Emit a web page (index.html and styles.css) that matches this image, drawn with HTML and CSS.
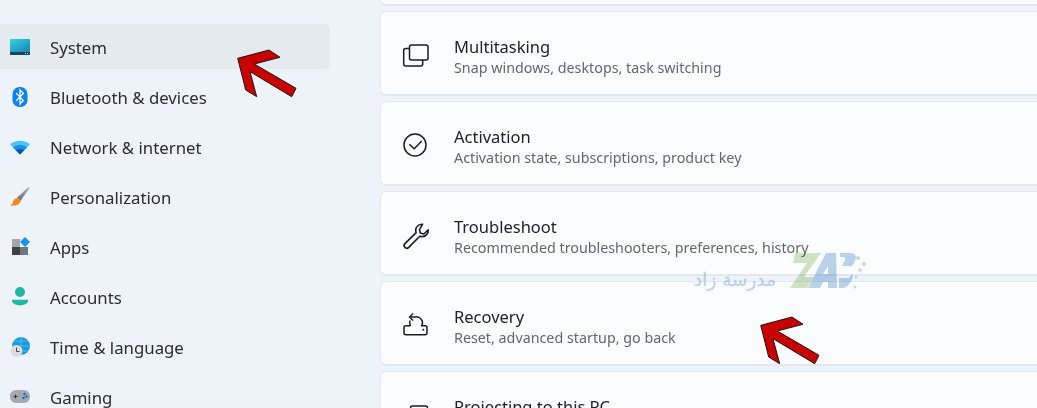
FILE: index.html
```html
<!DOCTYPE html>
<html lang="en">
<head>
<meta charset="utf-8">
<title>Settings</title>
<link rel="stylesheet" href="styles.css">
</head>
<body>
<div class="app">
  <nav class="sidebar">
    <div class="nav-item selected">
      <svg class="nav-icon" viewBox="0 0 20 20"><defs><linearGradient id="sys" x1="0" y1="0" x2="1" y2="1"><stop offset="0" stop-color="#35d3de"/><stop offset="1" stop-color="#1585b8"/></linearGradient></defs><path d="M0 2.800a.8.8 0 0 1 .8-.8h18.400a.8.8 0 0 1 .8.8V14.500H0z" fill="url(#sys)"/><path d="M0 14.500h20v2.700a.8.8 0 0 1-.8.8H.8a.8.8 0 0 1-.8-.8z" fill="#0c4a68"/><rect x="15" y="16" width="1" height="1" fill="#9cc"/><rect x="17" y="16" width="1" height="1" fill="#9cc"/></svg>
      <span>System</span>
    </div>
    <div class="nav-item">
      <svg class="nav-icon" viewBox="0 0 20 20"><rect x="2.500" y="0" width="15" height="20" rx="7" fill="#0a84f0"/><path d="M6.300 6.300l7 7.200-3.300 3.500V3l3.300 3.500-7 7.200" fill="none" stroke="#fff" stroke-width="1.300"/></svg>
      <span>Bluetooth &amp; devices</span>
    </div>
    <div class="nav-item">
      <svg class="nav-icon" viewBox="0 0 20 20"><path d="M0 7.200C5.500 2.500 14.500 2.500 20 7.200L10 17.500z" fill="#47c6f5"/><path d="M3 10.400C7 7.200 13 7.200 17 10.400L10 17.500z" fill="#1a8fe3"/><path d="M6 13.300c2.500-1.700 5.500-1.700 8 0L10 17.500z" fill="#0d56ad"/></svg>
      <span>Network &amp; internet</span>
    </div>
    <div class="nav-item">
      <svg class="nav-icon" viewBox="0 0 20 20"><defs><linearGradient id="brush" x1="0" y1="1" x2="1" y2="0"><stop offset="0" stop-color="#5f6770"/><stop offset="1" stop-color="#b4b8bc"/></linearGradient></defs><path d="M18.200.3c.8-.5 1.600.2 1.200 1L10.500 14 6.800 11z" fill="url(#brush)"/><path d="M6.500 11.300c2-.8 4 .8 3.900 2.900-.1 3-3.700 4.800-10.400 4.400 2-.8 2.700-2 3-3.800.3-1.700 1.500-3 3.500-3.500z" fill="#f78a1d"/></svg>
      <span>Personalization</span>
    </div>
    <div class="nav-item">
      <svg class="nav-icon" viewBox="0 0 20 20"><rect x="2" y="2" width="8" height="8" fill="#a3a7ab"/><rect x="2" y="10" width="8" height="8" fill="#3d4145"/><rect x="10" y="10" width="8" height="8" fill="#70767b"/><path d="M15 0l5 5-5 5-5-5z" fill="#1593ef"/></svg>
      <span>Apps</span>
    </div>
    <div class="nav-item">
      <svg class="nav-icon" viewBox="0 0 20 20"><circle cx="10" cy="5" r="5" fill="#1fb9a1"/><path d="M2 12.800h16c.3 0 .2 2.500-1.500 3.800-1.600 1.200-3.800 1.800-6.500 1.800s-4.900-.6-6.500-1.800C1.800 15.300 1.700 12.800 2 12.800z" fill="#1fb9a1"/></svg>
      <span>Accounts</span>
    </div>
    <div class="nav-item">
      <svg class="nav-icon" viewBox="0 0 20 20"><circle cx="11" cy="9" r="9" fill="#1a9adb"/><path d="M11 0v18M2 9h18M4 4h14M4 14h14" stroke="#5fd0ea" stroke-width=".7" fill="none"/><circle cx="6.500" cy="14" r="6" fill="#dcdcdc"/><path d="M6.500 10.500v4h3" stroke="#444" stroke-width="1" fill="none"/></svg>
      <span>Time &amp; language</span>
    </div>
    <div class="nav-item">
      <svg class="nav-icon" viewBox="0 0 20 20"><rect x="0" y="3" width="20" height="13" rx="6" fill="#a5a8ac"/><path d="M3.500 9.500h4M5.500 7.500v4" stroke="#333" stroke-width="1"/><circle cx="14.500" cy="7" r="1.200" fill="#0c6cc8"/><circle cx="16.500" cy="9.500" r="1.200" fill="#0c6cc8"/><circle cx="13.500" cy="11" r="1.200" fill="#0c6cc8"/></svg>
      <span>Gaming</span>
    </div>
  </nav>
  <main class="list">
    <div class="card"></div>
    <div class="card">
      <svg class="card-icon" viewBox="0 0 26 26"><rect x="6.500" y="1" width="18.500" height="15" rx="2" fill="none" stroke="#1c1c1c" stroke-width="1.500"/><path d="M6.500 4.500H2.700a2 2 0 0 0-2 2v13.500a2 2 0 0 0 2 2h15a2 2 0 0 0 2-2v-4" fill="none" stroke="#1c1c1c" stroke-width="1.500"/></svg>
      <div class="card-text"><div class="card-title">Multitasking</div><div class="card-sub">Snap windows, desktops, task switching</div></div>
    </div>
    <div class="card">
      <svg class="card-icon" viewBox="0 0 26 26"><circle cx="12" cy="11" r="11" fill="none" stroke="#1c1c1c" stroke-width="1.500"/><path d="M6.300 10.300l5 4.400L18.700 7" fill="none" stroke="#1c1c1c" stroke-width="1.500"/></svg>
      <div class="card-text"><div class="card-title">Activation</div><div class="card-sub">Activation state, subscriptions, product key</div></div>
    </div>
    <div class="card">
      <svg class="card-icon" viewBox="0 1 24.500 24.500"><path d="M18.500 1.200c-3.500-.3-6.500 2.300-6.500 5.800 0 .8.100 1.400.4 2.100L1.800 19.500c-1 1.200-1 2.700 0 3.600s2.500 1 3.600-.1L15.800 12.500c.7.300 1.400.4 2.200.4 3.500 0 6-2.900 5.800-6.500l-4.200 4-3.300-.9-.8-3.200z" fill="none" stroke="#1c1c1c" stroke-width="1.500" stroke-linejoin="round"/></svg>
      <div class="card-text"><div class="card-title">Troubleshoot</div><div class="card-sub">Recommended troubleshooters, preferences, history</div></div>
    </div>
    <div class="card">
      <svg class="card-icon" viewBox="0 0 26 26"><path d="M7 11.700H3a2 2 0 0 0-2 2v5a2 2 0 0 0 2 2h19a2 2 0 0 0 2-2v-5a2 2 0 0 0-2-2h-4" fill="none" stroke="#1c1c1c" stroke-width="1.500"/><path d="M7.500 3H12a6 6 0 0 1 6.500 9M7 6.500a6.500 6.500 0 0 0 .5 5.500" fill="none" stroke="#1c1c1c" stroke-width="1.500"/><path d="M10 -.5L6.500 3 10 6.500" fill="none" stroke="#1c1c1c" stroke-width="1.500"/><circle cx="20.300" cy="15.700" r="1" fill="#1c1c1c"/></svg>
      <div class="card-text"><div class="card-title">Recovery</div><div class="card-sub">Reset, advanced startup, go back</div></div>
    </div>
    <div class="card">
      <svg class="card-icon" viewBox="0 0 26 26"><rect x="7.500" y="2" width="17" height="14" rx="2" fill="none" stroke="#1c1c1c" stroke-width="1.500"/></svg>
      <div class="card-text"><div class="card-title">Projecting to this PC</div><div class="card-sub">Permissions, pairing PIN, discoverability</div></div>
    </div>
  </main>
</div>
<svg class="arrow arrow-top" viewBox="0 0 62 60"><path d="M1.700 9.300L33 1l11 7.300L18.300 15 60 39.300l-4.300 8.400L14 22.700l6.700 25-11-6.700z" fill="#c80000" stroke="#1a1a1a" stroke-width="1"/></svg>
<svg class="arrow arrow-bottom" viewBox="0 0 62 60"><path d="M1.700 9.300L33 1l11 7.300L18.300 15 60 39.300l-4.300 8.400L14 22.700l6.700 25-11-6.700z" fill="#c80000" stroke="#1a1a1a" stroke-width="1"/></svg>
<div class="watermark">
  <span class="wm-text" dir="rtl" lang="ar">مدرسة زاد</span>
  <svg class="wm-logo" viewBox="0 0 80 38"><path d="M5 1H31L14 25H24L17 36H0L17 11H3z" fill="#d3e5c3"/><path fill-rule="evenodd" d="M46 1H36L18 36H30l3-6h5v6H47zM38 14l-5 8h5z" fill="#bcd4ea"/><path d="M50 1h10c6 0 7 4 5 8l-3 5H52l3-6c1-2 0-3-2-3h-3zM49 26h10l3-4 1 3c-3 7-6 11-11 11h-3z" fill="#bcd4ea"/><circle cx="68" cy="6" r="2" fill="#cfe0c2"/><circle cx="74" cy="12" r="2" fill="#cfe0c2"/><circle cx="70" cy="18" r="2" fill="#d8dcdf"/><circle cx="66" cy="25" r="1.500" fill="#d8dcdf"/><circle cx="65" cy="35" r="1.500" fill="#cbdcec"/></svg>
</div>
</body>
</html>
```

FILE: styles.css
```css
* { box-sizing: border-box; }
html, body {
  margin: 0;
  height: 408px;
  overflow: hidden;
  background: #eef3f9;
  font-family: "Noto Sans", "Open Sans", sans-serif;
  color: #1b1b1b;
}
.app {
  display: flex;
  gap: 50px;
  height: 408px;
  overflow: hidden;
}
.sidebar {
  flex: 0 0 330px;
  display: flex;
  flex-direction: column;
  gap: 5px;
  padding-top: 24px;
}
.nav-item {
  flex: 0 0 45px;
  display: flex;
  align-items: center;
  gap: 20px;
  padding-left: 10px;
  border-radius: 0 6px 6px 0;
  font-size: 16.800px;
  color: #2a2d30;
}
.nav-item span { padding-top: 2px; }
.nav-item.selected { background: #e5eaee; }
.nav-icon { width: 20px; height: 20px; flex: none; }
.list {
  flex: 1;
  display: flex;
  flex-direction: column;
  gap: 5px;
  margin-top: -79px;
  min-width: 0;
}
.card {
  flex: 0 0 85px;
  display: flex;
  align-items: center;
  gap: 25px;
  width: 700px;
  padding: 8px 0 0 22px;
  background: #fbfcfe;
  border: 1px solid #e3e8ed;
  border-bottom-width: 2px;
  border-radius: 6px;
}
.card-icon { width: 26px; height: 26px; flex: none; overflow: visible; }
.card-title { font-size: 16.500px; line-height: 22px; color: #222; }
.card-sub { font-size: 14.300px; line-height: 20px; color: #666; }
.arrow { position: absolute; width: 62px; height: 60px; }
.arrow-top { left: 236px; top: 49px; }
.arrow-bottom { left: 759px; top: 316px; }
.watermark {
  position: absolute;
  left: 694px;
  top: 252px;
  width: 176px;
  display: flex;
  align-items: flex-end;
  justify-content: space-between;
  mix-blend-mode: multiply;
}
.wm-text {
  font-family: "DejaVu Sans", sans-serif;
  font-size: 18.500px;
  -webkit-text-stroke: 0.4px #c3d8ec;
  color: #c3d8ec;
}
.wm-logo { width: 80px; height: 38px; }
```
